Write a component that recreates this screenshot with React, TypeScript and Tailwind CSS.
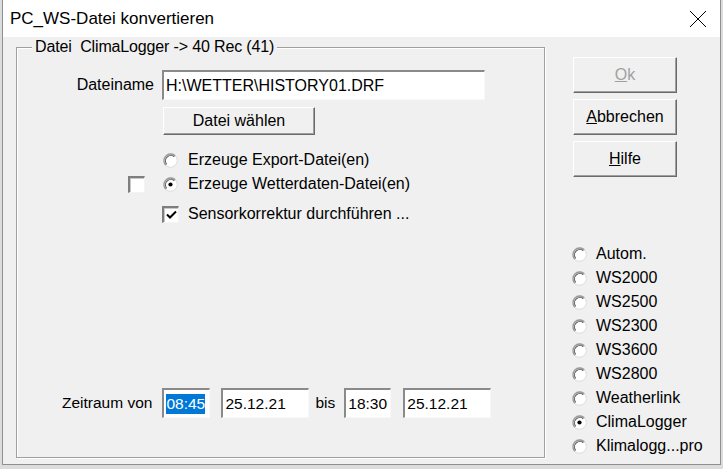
import React from 'react';

function Radio({ checked = false }: { checked?: boolean }) {
  return (
    <svg width="15" height="15" viewBox="0 0 15 15" className="shrink-0">
      <circle cx="7.5" cy="7.5" r="6.8" fill="#ffffff" stroke="#dcdcdc" strokeWidth="1" />
      <path d="M2.7 12.3 A6.8 6.8 0 0 1 12.3 2.7" fill="none" stroke="#9a9a9a" strokeWidth="1.3" />
      <path d="M3.7 11.3 A5.4 5.4 0 0 1 11.3 3.7" fill="none" stroke="#5f5f5f" strokeWidth="1.1" />
      {checked && <circle cx="7.5" cy="7.5" r="2.1" fill="#000000" />}
    </svg>
  );
}

function Check({ checked = false }: { checked?: boolean }) {
  return (
    <div className="w-[17px] h-[17px] shrink-0 bg-white border-t-2 border-l-2 border-t-[#7e7e7e] border-l-[#7e7e7e] border-r border-b border-r-[#f4f4f4] border-b-[#f4f4f4] shadow-[inset_1px_1px_0_#c8c8c8] flex items-center justify-center">
      {checked && (
        <svg width="11" height="10" viewBox="0 0 11 10">
          <path d="M1 4.5 L4 7.5 L10 1.5" fill="none" stroke="#000" strokeWidth="2" />
        </svg>
      )}
    </div>
  );
}

function Field({ value, w, selected = false }: { value: string; w: string; selected?: boolean }) {
  return (
    <div
      className={`${w} h-[30px] shrink-0 bg-white border-t-2 border-l-2 border-t-[#8a8a8a] border-l-[#8a8a8a] border-r border-b border-r-[#f8f8f8] border-b-[#f8f8f8] flex items-center pl-[2px] overflow-hidden whitespace-nowrap`}
    >
      {selected ? <span className="bg-[#0078d7] text-white leading-[20px]">{value}</span> : value}
    </div>
  );
}

function Button({ children, w, h, disabled = false }: { children: React.ReactNode; w: string; h: string; disabled?: boolean }) {
  return (
    <div
      className={`${w} ${h} shrink-0 bg-[#f0f0f0] border border-t-white border-l-white border-r-[#6a6a6a] border-b-[#6a6a6a] shadow-[inset_-1px_-1px_0_#a0a0a0] flex items-center justify-center text-[16px] ${disabled ? 'text-[#a0a0a0]' : 'text-black'}`}
    >
      {children}
    </div>
  );
}

const stations = ['Autom.', 'WS2000', 'WS2500', 'WS2300', 'WS3600', 'WS2800', 'Weatherlink', 'ClimaLogger', 'Klimalogg...pro'];

export default function App() {
  return (
    <div className="w-[723px] h-[469px] bg-[#dcdcdc] overflow-hidden font-['Liberation_Sans',Arial,sans-serif] text-black">
      <div className="ml-[2px] w-[719px] h-[465px] border-l border-r border-b border-[#8f8f8f] flex flex-col bg-[#f0f0f0]">
        {/* title bar */}
        <div className="h-[37px] bg-white flex items-center justify-between pl-[7px] pr-[13px] shrink-0">
          <span className="text-[17px]">PC_WS-Datei konvertieren</span>
          <svg width="18" height="18" viewBox="0 0 18 18">
            <path d="M1 1 L17 17 M17 1 L1 17" stroke="#000" strokeWidth="1" />
          </svg>
        </div>

        {/* body */}
        <div className="flex-1 flex pl-[13px] pt-[10px] pb-[7px]">
          {/* group box */}
          <div className="relative w-[529px] border border-[#a0a0a0] shadow-[inset_1px_1px_0_#fff,1px_1px_0_#fff] flex flex-col text-[16px]">
            <span className="absolute -top-[10px] left-[15px] px-[3px] bg-[#f0f0f0] leading-[18px] whitespace-pre tracking-[-0.15px]">
              Datei  ClimaLogger -&gt; 40 Rec (41)
            </span>

            <div className="mt-[22px] flex items-center">
              <span className="w-[137px] text-right">Dateiname</span>
              <div className="ml-[8px]">
                <Field value="H:\WETTER\HISTORY01.DRF" w="w-[323px]" />
              </div>
            </div>

            <div className="mt-[7px] ml-[146px]">
              <Button w="w-[152px]" h="h-[28px]">Datei wählen</Button>
            </div>

            <div className="mt-[13px] h-[24px] flex items-center pl-[146px]">
              <Radio />
              <span className="ml-[10px]">Erzeuge Export-Datei(en)</span>
            </div>
            <div className="h-[24px] flex items-center pl-[111px]">
              <Check />
              <div className="ml-[18px] flex items-center">
                <Radio checked />
                <span className="ml-[10px]">Erzeuge Wetterdaten-Datei(en)</span>
              </div>
            </div>
            <div className="mt-[6px] h-[24px] flex items-center pl-[145px]">
              <Check checked />
              <span className="ml-[9px]">Sensorkorrektur durchführen ...</span>
            </div>

            <div className="mt-auto mb-[39px] flex items-center pl-[45px] text-[15.5px]">
              <span>Zeitraum von</span>
              <div className="ml-[10px]">
                <Field value="08:45" w="w-[48px]" selected />
              </div>
              <div className="ml-[11px]">
                <Field value="25.12.21" w="w-[88px]" />
              </div>
              <span className="ml-[6px]">bis</span>
              <div className="ml-[9px]">
                <Field value="18:30" w="w-[47px]" />
              </div>
              <div className="ml-[12px]">
                <Field value="25.12.21" w="w-[88px]" />
              </div>
            </div>
          </div>

          {/* right column */}
          <div className="ml-[28px] flex flex-col">
            <div className="mt-[10px] flex flex-col gap-[6px]">
              <Button w="w-[104px]" h="h-[36px]" disabled>
                <span><span className="underline">O</span>k</span>
              </Button>
              <Button w="w-[104px]" h="h-[36px]">
                <span><span className="underline">A</span>bbrechen</span>
              </Button>
              <Button w="w-[104px]" h="h-[36px]">
                <span><span className="underline">H</span>ilfe</span>
              </Button>
            </div>

            <div className="mt-[65px] flex flex-col text-[16px]">
              {stations.map((s) => (
                <div key={s} className="h-[24px] flex items-center -ml-[1px]">
                  <Radio checked={s === 'ClimaLogger'} />
                  <span className="ml-[9px]">{s}</span>
                </div>
              ))}
            </div>
          </div>
        </div>
      </div>
    </div>
  );
}
